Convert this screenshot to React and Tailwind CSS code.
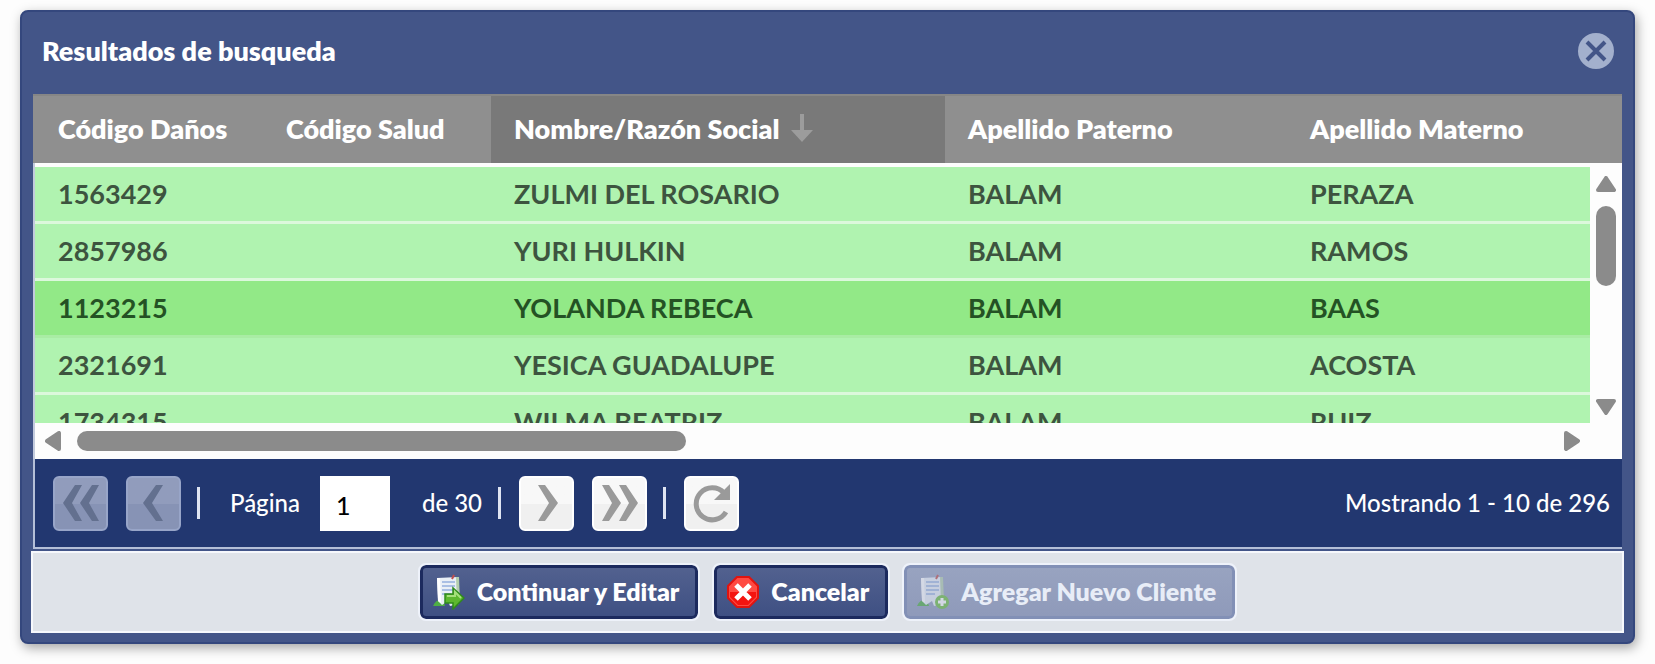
import React from "react";

const columns = [
  { key: "danos", label: "Código Daños", width: "w-[228px]" },
  { key: "salud", label: "Código Salud", width: "w-[228px]" },
  { key: "nombre", label: "Nombre/Razón Social", width: "w-[454px]", sorted: true },
  { key: "paterno", label: "Apellido Paterno", width: "w-[342px]" },
  { key: "materno", label: "Apellido Materno", width: "" },
];

const rows = [
  { danos: "1563429", salud: "", nombre: "ZULMI DEL ROSARIO", paterno: "BALAM", materno: "PERAZA" },
  { danos: "2857986", salud: "", nombre: "YURI HULKIN", paterno: "BALAM", materno: "RAMOS" },
  { danos: "1123215", salud: "", nombre: "YOLANDA REBECA", paterno: "BALAM", materno: "BAAS", active: true },
  { danos: "2321691", salud: "", nombre: "YESICA GUADALUPE", paterno: "BALAM", materno: "ACOSTA" },
  { danos: "1734315", salud: "", nombre: "WILMA BEATRIZ", paterno: "BALAM", materno: "RUIZ" },
];

function Columns() {
  return (
    <colgroup>
      {columns.map((col) => (
        <col key={col.key} className={col.width} />
      ))}
    </colgroup>
  );
}

function Triangle({ className }) {
  return (
    <svg viewBox="0 0 20 16" className={className} fill="#8b8b8b" stroke="#8b8b8b" strokeWidth="4" strokeLinejoin="round">
      <path d="M10 2L18 14H2Z" />
    </svg>
  );
}

function PageButton({ label, disabled, children }) {
  return (
    <button
      type="button"
      aria-label={label}
      disabled={disabled}
      className="flex size-[55px] items-center justify-center rounded-md border-2 border-white bg-linear-to-b from-[#f8f8f8] from-50% to-[#f0f0f0] to-50% text-[#9a9a9a] disabled:border-[#98a5c8] disabled:from-[#919cbc] disabled:to-[#8793b5] disabled:text-[#63708f]"
    >
      <svg viewBox="0 0 40 40" className="size-10" fill="currentColor">
        {children}
      </svg>
    </button>
  );
}

function Separator() {
  return <span className="mr-[18px] ml-4 h-8 w-[3px] bg-[#dfe4f2]" />;
}

// Paper sheet over a small green hill, shared by the two client buttons
function ClientIcon({ children }) {
  return (
    <svg viewBox="0 0 32 36" className="h-9 w-8 shrink-0">
      <path d="M0 32C2 27 6 25 10 26L12 32Z" fill="#4fae45" />
      <path d="M4 4L25 3L26 30L17 32L15 27L9 31L5 27Z" fill="#e9eff6" />
      <path d="M4 4L7 4L8 29L5 27Z" fill="#fff" />
      <path d="M23 3L26 3L27 28L24 30Z" fill="#b4cfae" />
      <path d="M9 8H22M9 12H22M9 16H22M9 20H18" stroke="#a9bfe4" strokeWidth="2" />
      <path d="M19 5L21 1" stroke="#c0504d" strokeWidth="2" />
      {children}
    </svg>
  );
}

function ActionButton({ icon, children, disabled }) {
  return (
    <button
      type="button"
      disabled={disabled}
      className="flex h-[54px] items-center gap-3 rounded-md border-3 border-[#1c2a5e] bg-linear-to-b from-[#52618f] to-[#3f5083] pr-4 pl-[10px] text-[25px] font-extrabold text-white outline-2 outline-[#eef2fa] disabled:border-[#8290b6] disabled:from-[#98a3c0] disabled:to-[#8f9aba] disabled:text-[#e8edf7]"
    >
      {icon}
      {children}
    </button>
  );
}

export default function App() {
  return (
    <div className="bg-[#fdfdfd] px-5 pt-[10px] pb-5 font-['Lato',sans-serif]">
      <div className="rounded-lg border-2 border-[#34477d] bg-[#435588] px-[9px] pb-[9px] shadow-[2px_4px_12px_rgba(0,0,0,0.35)]">
        <div className="flex h-[82px] items-center justify-between pr-[10px] pb-1 pl-[11px]">
          <h1 className="text-[27px] font-extrabold text-white">Resultados de busqueda</h1>
          <button type="button" aria-label="Cerrar">
            <svg viewBox="0 0 36 36" className="size-9">
              <circle cx="18" cy="18" r="18" fill="#a3b0cd" />
              <path d="M9 9L27 27M27 9L9 27" stroke="#435588" strokeWidth="4" />
            </svg>
          </button>
        </div>

        <div className="mx-[2px]">
          <div className="border-t-2 border-[#868686] bg-[#8f8f8f] pl-[2px]">
            <table className="w-full table-fixed text-left">
              <Columns />
              <thead>
                <tr className="h-[67px]">
                  {columns.map((col) => (
                    <th
                      key={col.key}
                      className={
                        col.sorted
                          ? "bg-[#797979] pl-[23px] text-[27px] font-extrabold whitespace-nowrap text-white"
                          : "pl-[23px] text-[27px] font-extrabold whitespace-nowrap text-white"
                      }
                    >
                      {col.label}
                      {col.sorted && (
                        <svg viewBox="0 0 22 28" className="ml-3 inline h-7 w-[22px] align-[-3px]" fill="#9c9c9c">
                          <path d="M9 0H13V16H22L11 28L0 16H9Z" />
                        </svg>
                      )}
                    </th>
                  ))}
                </tr>
              </thead>
            </table>
          </div>

          <div className="border-l-2 border-[#c3cbdd] bg-[#fdfdfd] pt-1">
            <div className="flex h-64">
              <div className="min-w-0 flex-1 overflow-hidden">
                <table className="w-full table-fixed border-separate border-spacing-0">
                  <Columns />
                  <tbody>
                    {rows.map((row) => (
                      <tr
                        key={row.danos}
                        className={
                          row.active
                            ? "h-[57px] border-[#a9eca4] bg-[#92e987] text-[#245224]"
                            : "h-[57px] border-[#dcf8dc] bg-[#b0f3b0] text-[#3d543f]"
                        }
                      >
                        {columns.map((col) => (
                          <td
                            key={col.key}
                            className="border-b-3 border-inherit pl-[23px] text-[27px] font-bold whitespace-nowrap"
                          >
                            {row[col.key]}
                          </td>
                        ))}
                      </tr>
                    ))}
                  </tbody>
                </table>
              </div>
              <div className="flex w-8 flex-col items-center pt-[9px] pb-2">
                <Triangle className="h-4 w-5" />
                <div className="mt-[14px] h-20 w-5 rounded-full bg-[#8b8b8b]" />
                <Triangle className="mt-auto h-4 w-5 rotate-180" />
              </div>
            </div>
            <div className="flex h-9 items-center pr-10 pl-2">
              <Triangle className="h-4 w-5 -rotate-90" />
              <div className="ml-[14px] flex-1">
                <div className="h-5 w-[41%] rounded-full bg-[#8b8b8b]" />
              </div>
              <Triangle className="h-4 w-5 rotate-90" />
            </div>
          </div>

          <div className="flex h-[90px] items-center border-b-2 border-l-2 border-[#b4bfd8] bg-[#223770] pr-3 pl-[18px] text-2xl font-medium text-white">
            <PageButton label="Primera página" disabled>
              <path d="M14 2H21L11 20L21 38H14L2 20ZM31 2H38L28 20L38 38H31L19 20Z" />
            </PageButton>
            <span className="w-[18px]" />
            <PageButton label="Página anterior" disabled>
              <path d="M22 2H29L18 20L29 38H22L9 20Z" />
            </PageButton>
            <Separator />
            <label htmlFor="pagina" className="ml-3">
              Página
            </label>
            <input
              id="pagina"
              defaultValue="1"
              className="mr-8 ml-5 h-[55px] w-[70px] bg-white pt-1 pl-4 text-[25px] text-black"
            />
            <span>de 30</span>
            <Separator />
            <PageButton label="Página siguiente">
              <path d="M11 2H18L31 20L18 38H11L22 20Z" />
            </PageButton>
            <span className="w-[18px]" />
            <PageButton label="Última página">
              <path d="M2 2H9L21 20L9 38H2L12 20ZM19 2H26L38 20L26 38H19L29 20Z" />
            </PageButton>
            <Separator />
            <PageButton label="Actualizar">
              <path d="M34 29A16 16 0 1 1 32 10" fill="none" stroke="currentColor" strokeWidth="5" />
              <path d="M38 1V17H22Z" />
            </PageButton>
            <span className="ml-auto">Mostrando 1 - 10 de 296</span>
          </div>
        </div>

        <div className="mt-[2px] flex items-center justify-center gap-4 border-2 border-[#f6f8fc] bg-[#dfe3e9] py-3">
          <ActionButton
            icon={
              <ClientIcon>
                <path d="M12 20H20V14L31 24L20 35V29H12Z" fill="#5db82f" stroke="#2f8a1c" strokeWidth="1.5" />
                <path d="M14 22H22V18L28 24" fill="none" stroke="#a5e07c" strokeWidth="2" />
              </ClientIcon>
            }
          >
            Continuar y Editar
          </ActionButton>
          <ActionButton
            icon={
              <svg viewBox="0 0 32 32" className="size-8 shrink-0">
                <path d="M10 1H22L31 10V22L22 31H10L1 22V10Z" fill="#ff4a42" stroke="#e01410" strokeWidth="2" />
                <path d="M3 16H29V21L21 29H11L3 21Z" fill="#f41410" />
                <path d="M9 9L23 23M23 9L9 23" stroke="#fff" strokeWidth="5" />
              </svg>
            }
          >
            Cancelar
          </ActionButton>
          <ActionButton
            disabled
            icon={
              <span className="opacity-60">
                <ClientIcon>
                  <circle cx="25" cy="28" r="7" fill="#6fc043" />
                  <path d="M25 24V32M21 28H29" stroke="#fff" strokeWidth="3" />
                </ClientIcon>
              </span>
            }
          >
            Agregar Nuevo Cliente
          </ActionButton>
        </div>
      </div>
    </div>
  );
}
